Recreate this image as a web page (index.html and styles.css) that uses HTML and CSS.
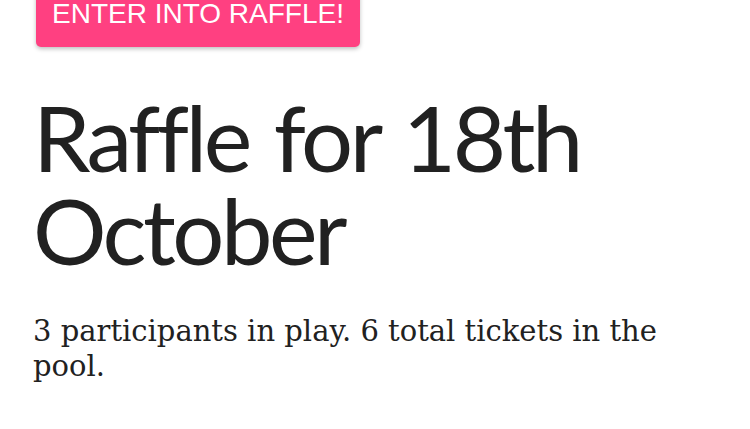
FILE: index.html
```html
<!DOCTYPE html>
<html>
<head>
<meta charset="utf-8">
<link rel="stylesheet" href="styles.css">
</head>
<body>
<main class="page">
  <button class="enter-btn">ENTER INTO RAFFLE!</button>
  <h1 class="title">Raffle for 18th October</h1>
  <p class="summary">3 participants in play. 6 total tickets in the pool.</p>
</main>
</body>
</html>
```
FILE: styles.css
```css
html, body {
  margin: 0;
  padding: 0;
  background: #ffffff;
}
.page {
  padding: 0 40px 0 33px;
  margin-top: -20px;
}
.enter-btn {
  display: block;
  margin-left: 3px;
  width: 324px;
  height: 67px;
  padding: 0;
  border: none;
  border-radius: 5px;
  background: #ff4081;
  color: #ffffff;
  font-family: "Liberation Sans", Arial, sans-serif;
  font-size: 28px;
  line-height: 1;
  box-shadow: 0 2px 4px rgba(0,0,0,0.25);
}
.title {
  margin: 43px 0 0;
  font-family: Lato, sans-serif;
  font-weight: 400;
  font-size: 92px;
  line-height: 93px;
  letter-spacing: -3.5px;
  word-spacing: 5px;
  color: #212121;
}
.summary {
  margin: 38px 0 0;
  font-family: "DejaVu Serif", serif;
  font-size: 29px;
  line-height: 35px;
  color: #212121;
}
```
